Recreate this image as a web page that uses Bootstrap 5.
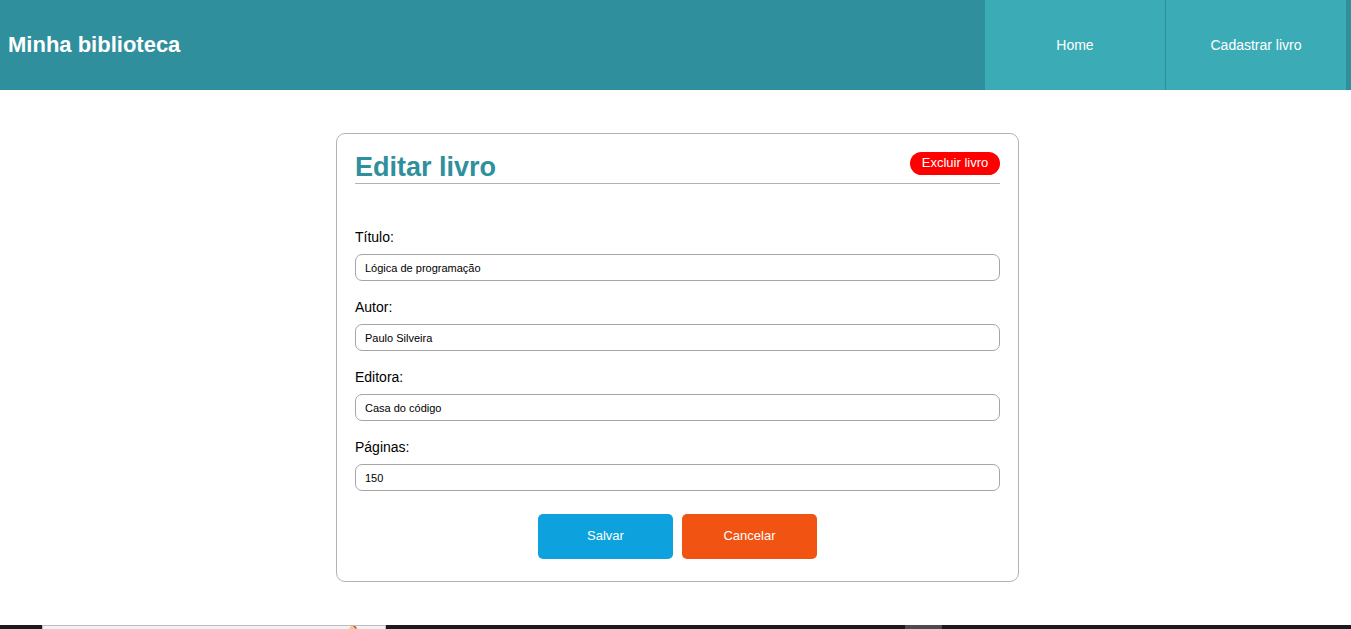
<!DOCTYPE html>
<html lang="pt-BR">
<head>
<meta charset="utf-8">
<meta name="viewport" content="width=device-width, initial-scale=1">
<title>Minha biblioteca</title>
<link rel="stylesheet" href="https://cdn.jsdelivr.net/npm/bootstrap@5.3.0/dist/css/bootstrap.min.css">
<style>
  body { font-family: "Liberation Sans", Arial, sans-serif; font-size: 14px; color: #000; }
  .topbar { background: #2f8f9d; min-height: 90px; padding-right: 5px; }
  .brand { font-size: 22px; line-height: 28px; padding-left: 8px; }
  .menu { gap: 1px; }
  .menu a { background: #3bacb6; width: 180px; font-size: 14px; }
  .page { padding: 43px 0 43px 4px; }
  .panel { width: 100%; max-width: 683px; border: 1px solid #b3b3b3; border-radius: 9px; padding: 18px 18px 22px; }
  .panel-head { border-bottom: 1px solid #b3b3b3; margin-bottom: 43px; height: 32px; }
  .panel-head h2 { font-size: 27px; line-height: 30px; color: #2f8f9d; }
  .btn-delete { background: #f00; color: #fff; border: 0; border-radius: 12px; width: 90px; height: 23px; padding: 0 0 2px; font-size: 13px; line-height: 20px; }
  .field { margin-bottom: 16px; }
  .field label { line-height: 20px; margin-bottom: 7px; display: block; }
  .field .form-control { height: 27px; border: 1px solid #a6a6a6; border-radius: 7px; padding: 0 9px; font-size: 11px; color: #000; }
  .btn-action { width: 135px; height: 45px; border: 0; border-radius: 5px; color: #fff; padding: 0 0 2px; font-size: 13px; line-height: 20px; }
  .actions { gap: 9px; margin-top: 23px; }
  .save { background: #0da2dd; }
  .cancel { background: #f15412; }
  .taskbar { height: 4px; background: #1b1a1e; }
  .task-search { margin-left: 42px; width: 344px; background: #f2f2f2; border: 1px solid #bdbdbd; border-bottom: 0; padding-left: 306px; }
  .task-search svg { display: block; }
  .task-active { margin-left: 519px; width: 37px; background: #4c4b4e; }
</style>
</head>
<body class="d-flex flex-column min-vh-100 bg-white">
<header class="topbar d-flex justify-content-between align-items-stretch">
  <h1 class="brand fw-bold text-white mb-0 align-self-center">Minha biblioteca</h1>
  <nav class="menu d-flex">
    <a href="#" class="d-flex align-items-center justify-content-center text-white text-decoration-none">Home</a>
    <a href="#" class="d-flex align-items-center justify-content-center text-white text-decoration-none">Cadastrar livro</a>
  </nav>
</header>
<main class="page d-flex justify-content-center flex-grow-1 align-items-start">
  <form class="panel">
    <div class="panel-head d-flex justify-content-between align-items-start">
      <h2 class="fw-bold mb-0">Editar livro</h2>
      <button type="button" class="btn btn-delete">Excluir livro</button>
    </div>
    <div class="field"><label for="titulo">Título:</label><input type="text" id="titulo" class="form-control" value="Lógica de programação"></div>
    <div class="field"><label for="autor">Autor:</label><input type="text" id="autor" class="form-control" value="Paulo Silveira"></div>
    <div class="field"><label for="editora">Editora:</label><input type="text" id="editora" class="form-control" value="Casa do código"></div>
    <div class="field mb-0"><label for="paginas">Páginas:</label><input type="text" id="paginas" class="form-control" value="150"></div>
    <div class="actions d-flex justify-content-center">
      <button type="submit" class="btn btn-action save">Salvar</button>
      <button type="button" class="btn btn-action cancel">Cancelar</button>
    </div>
  </form>
</main>
<footer class="taskbar d-flex overflow-hidden" aria-hidden="true">
  <div class="task-search"><svg width="10" height="3" viewBox="0 0 10 3"><path d="M0 3L2 0h3l3 3z" fill="#f3cf72"/><path d="M4 0h2l2 2-1 1z" fill="#c9444c"/></svg></div>
  <div class="task-active"></div>
</footer>
<script src="https://cdn.jsdelivr.net/npm/bootstrap@5.3.0/dist/js/bootstrap.bundle.min.js"></script>
</body>
</html>
